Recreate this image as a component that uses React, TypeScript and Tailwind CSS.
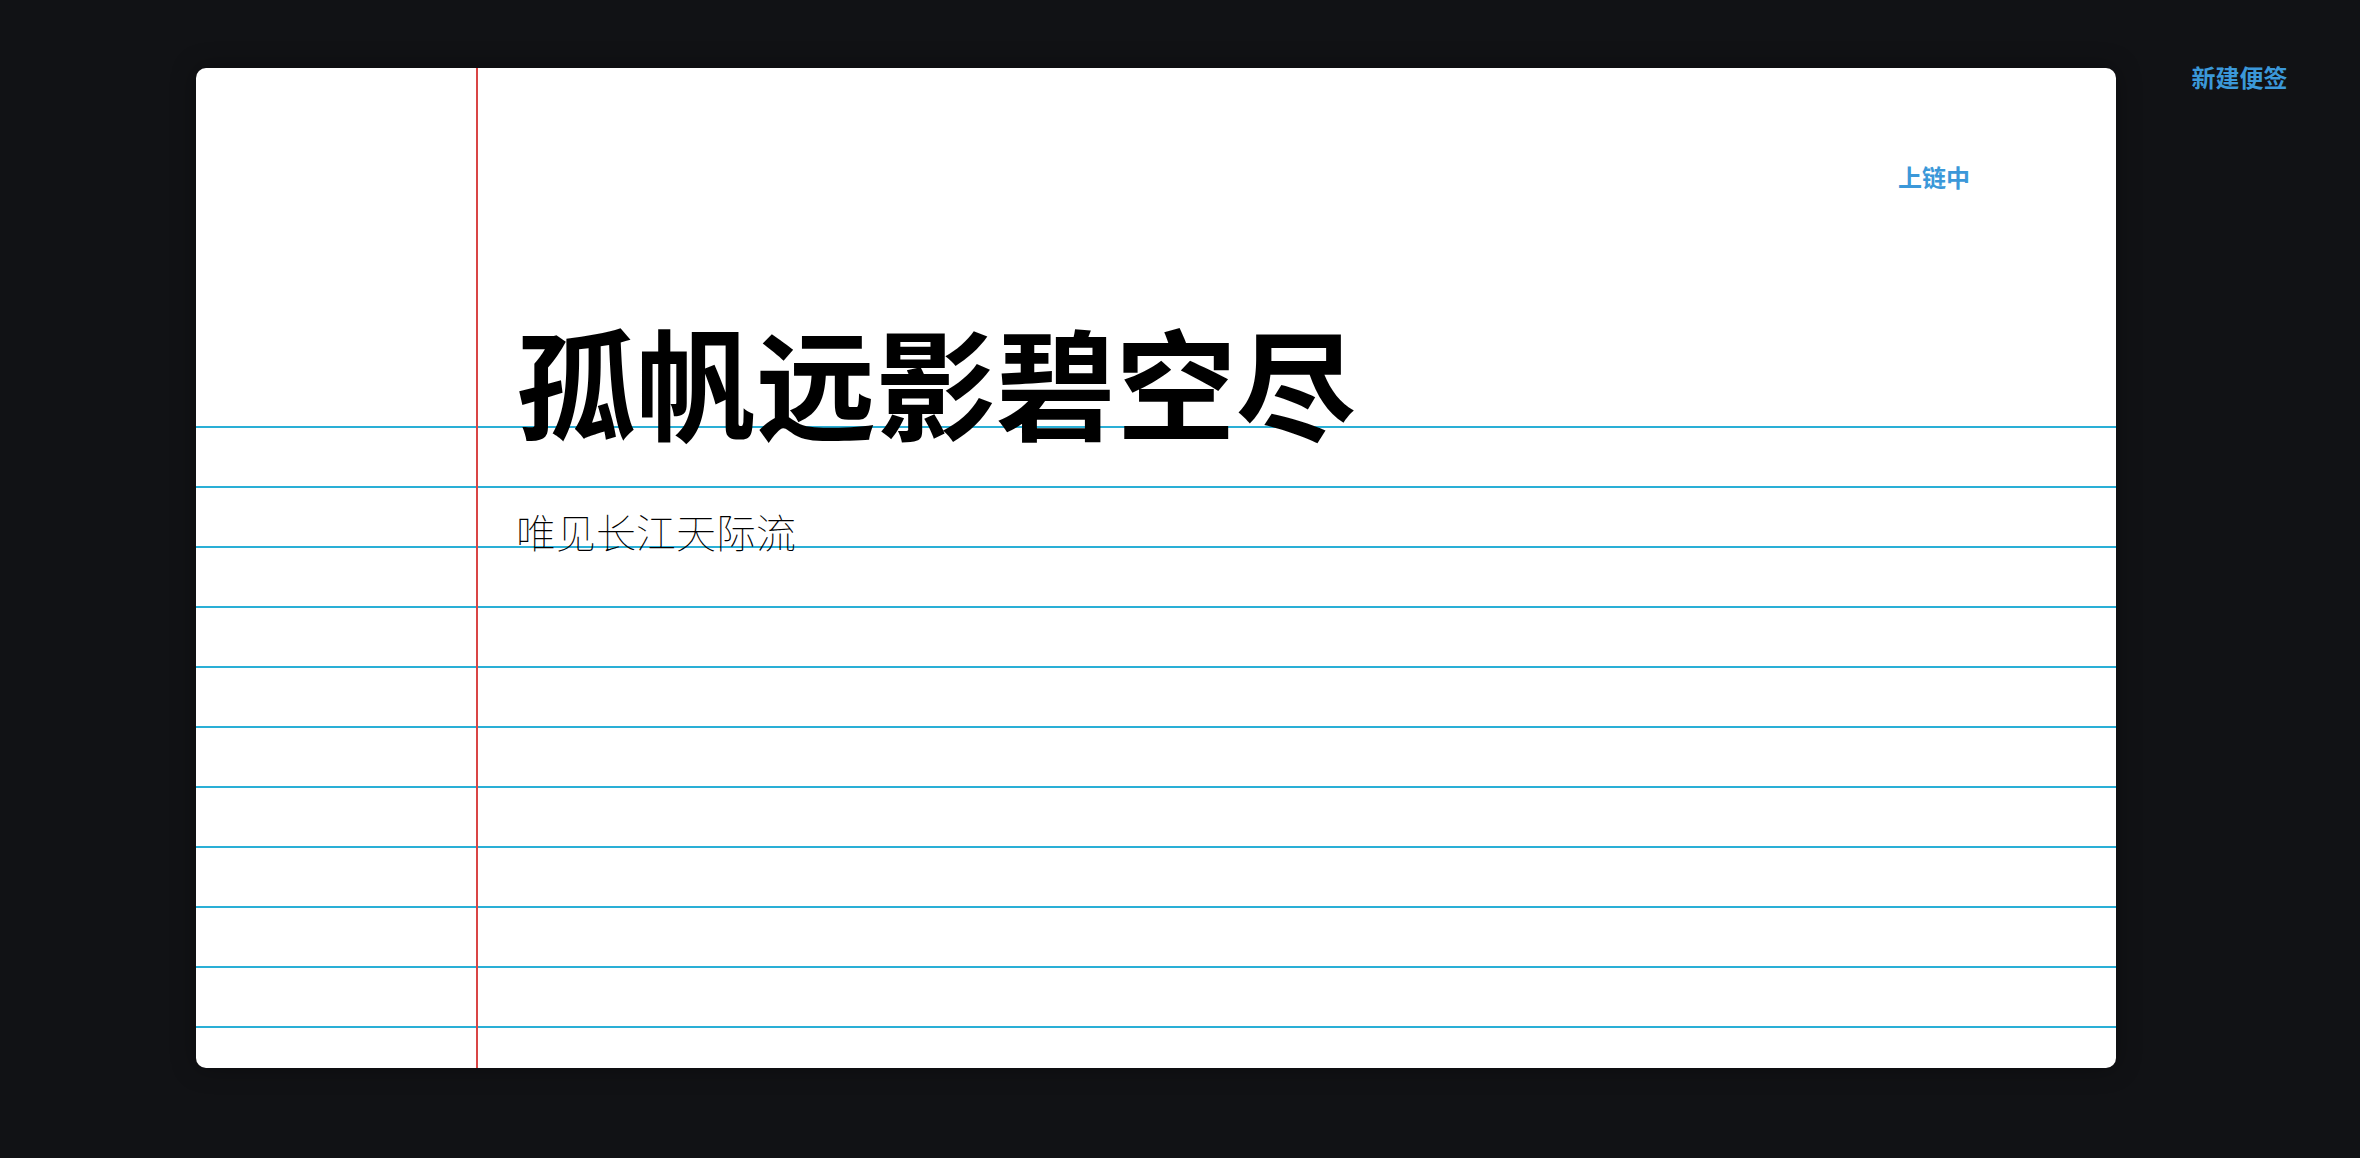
import React from "react";

export default function App() {
  return (
    <div
      className="min-h-[1158px] w-full bg-[#111215] flex items-start"
      style={{ fontFamily: '"Noto Sans CJK SC", "Noto Sans", sans-serif' }}
    >
      <div className="pl-[196px] pt-[68px]">
        <div
          className="w-[1920px] h-[1000px] rounded-[10px] overflow-hidden bg-white shadow-[0_0_24px_rgba(0,0,0,0.35)] bg-no-repeat [background-image:linear-gradient(to_right,transparent_280px,#d94545_280px,#d94545_282px,transparent_282px),linear-gradient(#fff,#fff),repeating-linear-gradient(to_bottom,transparent_0px,transparent_58px,#2aafd6_58px,#2aafd6_60px)] [background-size:100%_100%,100%_300px,100%_100%] flex flex-col"
        >
          <div className="flex justify-end pr-[146px] pt-[92px]">
            <span className="text-[24px] leading-[34px] font-semibold text-[#3b98d9]">上链中</span>
          </div>
          <div className="pl-[320px] pt-[126px] flex flex-col">
            <h1 className="text-[120px] leading-[120px] font-bold text-black">孤帆远影碧空尽</h1>
            <p className="mt-[69px] text-[40px] leading-[44px] font-thin text-black">唯见长江天际流</p>
          </div>
        </div>
      </div>
      <div className="flex-1 flex justify-center pt-[60px] pl-[3px]">
        <span className="text-[24px] leading-[34px] font-semibold text-[#3b98d9]">新建便签</span>
      </div>
    </div>
  );
}
